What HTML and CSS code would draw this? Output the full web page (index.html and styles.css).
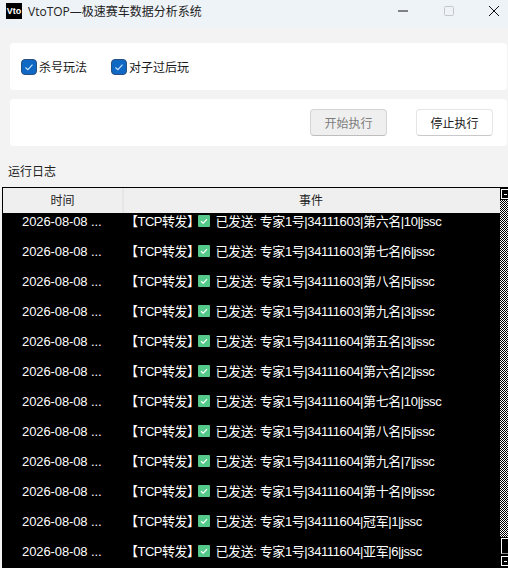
FILE: index.html
```html
<!DOCTYPE html>
<html lang="zh-CN">
<head>
<meta charset="utf-8">
<title>VtoTOP</title>
<link rel="stylesheet" href="styles.css">
</head>
<body>
<header class="titlebar">
  <div class="logo">Vto</div>
  <div class="title">VtoTOP—极速赛车数据分析系统</div>
  <div class="winbtns">
    <svg class="wb" viewBox="0 0 12 12"><path d="M1 6h10" stroke="#111" stroke-width="1" fill="none"/></svg>
    <svg class="wb" viewBox="0 0 12 12"><rect x="1.5" y="1.5" width="9" height="9" rx="1" stroke="#c4c6c8" fill="none"/></svg>
    <svg class="wb" viewBox="0 0 12 12"><path d="M1 1l10 10M11 1L1 11" stroke="#111" stroke-width="1" fill="none"/></svg>
  </div>
</header>
<section class="card options">
  <label class="check"><span class="box"><svg viewBox="0 0 14 14"><path d="M3.5 7.5l2.4 2.2 4.6-5" stroke="#cfe4fa" stroke-width="1.1" fill="none"/></svg></span>杀号玩法</label>
  <label class="check"><span class="box"><svg viewBox="0 0 14 14"><path d="M3.5 7.5l2.4 2.2 4.6-5" stroke="#cfe4fa" stroke-width="1.1" fill="none"/></svg></span>对子过后玩</label>
</section>
<section class="card actions">
  <button class="btn disabled">开始执行</button>
  <button class="btn">停止执行</button>
</section>
<div class="loglabel">运行日志</div>
<section class="table">
  <div class="main">
    <div class="thead"><div class="th c1">时间</div><div class="th c2">事件</div></div>
    <div class="tbody">
      <div class="row"><div class="c1">2026-08-08 ...</div><div class="c2"><span class="tag">【TCP转发】</span><span class="ok"><svg viewBox="0 0 12 12"><path d="M3 6.2l2.2 2 3.8-4" stroke="#fff" stroke-width="1.2" fill="none"/></svg></span>已发送: 专家1号|34111603|第六名|10|jssc</div></div>
      <div class="row"><div class="c1">2026-08-08 ...</div><div class="c2"><span class="tag">【TCP转发】</span><span class="ok"><svg viewBox="0 0 12 12"><path d="M3 6.2l2.2 2 3.8-4" stroke="#fff" stroke-width="1.2" fill="none"/></svg></span>已发送: 专家1号|34111603|第七名|6|jssc</div></div>
      <div class="row"><div class="c1">2026-08-08 ...</div><div class="c2"><span class="tag">【TCP转发】</span><span class="ok"><svg viewBox="0 0 12 12"><path d="M3 6.2l2.2 2 3.8-4" stroke="#fff" stroke-width="1.2" fill="none"/></svg></span>已发送: 专家1号|34111603|第八名|5|jssc</div></div>
      <div class="row"><div class="c1">2026-08-08 ...</div><div class="c2"><span class="tag">【TCP转发】</span><span class="ok"><svg viewBox="0 0 12 12"><path d="M3 6.2l2.2 2 3.8-4" stroke="#fff" stroke-width="1.2" fill="none"/></svg></span>已发送: 专家1号|34111603|第九名|3|jssc</div></div>
      <div class="row"><div class="c1">2026-08-08 ...</div><div class="c2"><span class="tag">【TCP转发】</span><span class="ok"><svg viewBox="0 0 12 12"><path d="M3 6.2l2.2 2 3.8-4" stroke="#fff" stroke-width="1.2" fill="none"/></svg></span>已发送: 专家1号|34111604|第五名|3|jssc</div></div>
      <div class="row"><div class="c1">2026-08-08 ...</div><div class="c2"><span class="tag">【TCP转发】</span><span class="ok"><svg viewBox="0 0 12 12"><path d="M3 6.2l2.2 2 3.8-4" stroke="#fff" stroke-width="1.2" fill="none"/></svg></span>已发送: 专家1号|34111604|第六名|2|jssc</div></div>
      <div class="row"><div class="c1">2026-08-08 ...</div><div class="c2"><span class="tag">【TCP转发】</span><span class="ok"><svg viewBox="0 0 12 12"><path d="M3 6.2l2.2 2 3.8-4" stroke="#fff" stroke-width="1.2" fill="none"/></svg></span>已发送: 专家1号|34111604|第七名|10|jssc</div></div>
      <div class="row"><div class="c1">2026-08-08 ...</div><div class="c2"><span class="tag">【TCP转发】</span><span class="ok"><svg viewBox="0 0 12 12"><path d="M3 6.2l2.2 2 3.8-4" stroke="#fff" stroke-width="1.2" fill="none"/></svg></span>已发送: 专家1号|34111604|第八名|5|jssc</div></div>
      <div class="row"><div class="c1">2026-08-08 ...</div><div class="c2"><span class="tag">【TCP转发】</span><span class="ok"><svg viewBox="0 0 12 12"><path d="M3 6.2l2.2 2 3.8-4" stroke="#fff" stroke-width="1.2" fill="none"/></svg></span>已发送: 专家1号|34111604|第九名|7|jssc</div></div>
      <div class="row"><div class="c1">2026-08-08 ...</div><div class="c2"><span class="tag">【TCP转发】</span><span class="ok"><svg viewBox="0 0 12 12"><path d="M3 6.2l2.2 2 3.8-4" stroke="#fff" stroke-width="1.2" fill="none"/></svg></span>已发送: 专家1号|34111604|第十名|9|jssc</div></div>
      <div class="row"><div class="c1">2026-08-08 ...</div><div class="c2"><span class="tag">【TCP转发】</span><span class="ok"><svg viewBox="0 0 12 12"><path d="M3 6.2l2.2 2 3.8-4" stroke="#fff" stroke-width="1.2" fill="none"/></svg></span>已发送: 专家1号|34111604|冠军|1|jssc</div></div>
      <div class="row"><div class="c1">2026-08-08 ...</div><div class="c2"><span class="tag">【TCP转发】</span><span class="ok"><svg viewBox="0 0 12 12"><path d="M3 6.2l2.2 2 3.8-4" stroke="#fff" stroke-width="1.2" fill="none"/></svg></span>已发送: 专家1号|34111604|亚军|6|jssc</div></div>
    </div>
  </div>
  <div class="scrollbar">
    <div class="sbtn top"></div>
    <div class="track"></div>
    <div class="thumb"></div>
    <div class="sbtn bottom"></div>
  </div>
</section>
</body>
</html>
```

FILE: styles.css
```css
* { box-sizing: border-box; }
html, body { margin: 0; height: 100%; }
body {
  width: 508px;
  height: 568px;
  overflow: hidden;
  background: #f3f3f3;
  font-family: "Open Sans", "Noto Sans CJK SC", sans-serif;
  font-size: 12px;
  color: #1a1a1a;
  display: flex;
  flex-direction: column;
}
.titlebar {
  height: 27px;
  flex: none;
  background: #eef3f8;
  display: flex;
  align-items: center;
  padding: 0 0 5px 6px;
}
.logo {
  width: 16px;
  height: 16px;
  background: #000;
  color: #fff;
  font: bold 9px/16px "Liberation Sans", sans-serif;
  text-align: center;
}
.title { margin-left: 6px; font-size: 12px; color: #222; }
.winbtns { margin-left: auto; display: flex; align-items: center; gap: 33.5px; padding-right: 8px; }
.wb { width: 12px; height: 12px; display: block; }
.card {
  background: #fff;
  border-radius: 4px;
  margin-left: 10px;
  margin-right: 1px;
  height: 47px;
  flex: none;
  display: flex;
  align-items: center;
}
.options { margin-top: 16px; padding-left: 11px; gap: 24px; }
.actions { margin-top: 9px; justify-content: flex-end; padding-right: 14px; gap: 29px; }
.check { display: flex; align-items: center; gap: 2px; font-size: 12px; }
.box {
  width: 16px;
  height: 16px;
  background: #0f68c4;
  border: 1px solid #2a4f7e;
  border-radius: 4px;
  display: block;
}
.box svg { width: 14px; height: 14px; display: block; }
.btn {
  width: 77px;
  height: 27px;
  border: 1px solid #e5e5e5;
  border-bottom-color: #c9c9c9;
  border-radius: 4px;
  background: #fff;
  color: #1a1a1a;
  font: 12px "Open Sans", "Noto Sans CJK SC", sans-serif;
  padding: 0;
}
.btn.disabled { background: #efefef; color: #7d7d7d; border-color: #d4d4d4; border-bottom-color: #bdbdbd; }
.loglabel { margin: 18px 0 0 8px; height: 23px; line-height: 16px; font-size: 12px; color: #222; }
.table {
  flex: 1;
  margin-left: 2px;
  min-height: 0;
  background: #000;
  border-top: 1px solid #000;
  border-left: 1px solid #000;
  display: flex;
  overflow: hidden;
}
.main { flex: 1; min-width: 0; position: relative; overflow: hidden; }
.thead {
  position: relative;
  z-index: 1;
  height: 25px;
  background: #efefef;
  display: flex;
  color: #222;
}
.th { text-align: center; line-height: 25px; font-size: 12px; }
.thead .c1 { width: 121px; border-right: 2px solid #e6e6e6; }
.thead .c2 { flex: 1; padding-right: 2px; }
.tbody { margin-top: -6px; }
.row {
  height: 30px;
  display: flex;
  align-items: center;
  color: #fff;
  font-family: "Liberation Sans", "Noto Sans CJK SC", sans-serif;
  font-size: 13px;
  white-space: nowrap;
  padding-bottom: 1px;
}
.row .c1 { width: 121px; padding-left: 19px; letter-spacing: -0.1px; }
.row .c2 { letter-spacing: -0.4px; display: flex; align-items: center; margin-bottom: 2px; padding-left: 1px; }
.tag { letter-spacing: -0.5px; }
.ok {
  width: 12px;
  height: 12px;
  background: #55c98a;
  border-radius: 1px;
  margin: 1px 6px 0 -2px;
  display: block;
  flex: none;
}
.ok svg { width: 12px; height: 12px; display: block; }
.scrollbar { width: 8px; flex: none; display: flex; flex-direction: column; background: #000; }
.sbtn { border: 1px solid #fff; border-right-width: 0; margin-left: 1px; flex: none; }
.sbtn.top { height: 10px; margin-top: 1px; background: linear-gradient(#fff,#fff) center/3px 1px no-repeat #000; }
.track {
  flex: 1;
  margin-top: 1px;
  background: conic-gradient(#fff 25%, #000 0 50%, #fff 0 75%, #000 0) 0 0/2px 2px;
}
.thumb { height: 16px; flex: none; border: 1px solid #fff; border-right-width: 0; border-bottom-color: #888; margin: 1px 0 0 1px; }
.sbtn.bottom { height: 10px; margin-top: 2px; margin-bottom: 2px; background: linear-gradient(#fff,#fff) center/3px 1px no-repeat #000; }
```
